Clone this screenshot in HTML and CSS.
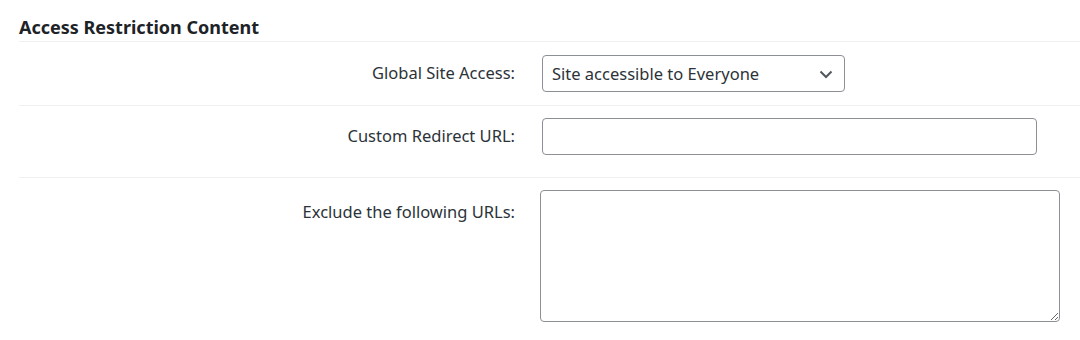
FILE: index.html
```html
<!DOCTYPE html>
<html lang="en">
<head>
    <meta charset="UTF-8">
    <title>Access Restriction Content</title>
    <link rel="stylesheet" href="styles.css">
</head>
<body>

    <h2 class="section-title">Access Restriction Content</h2>

    <div class="form-table">
        <div class="form-row">
            <label class="form-label" for="site-access">Global Site Access:</label>
            <div class="form-field">
                <div class="select-box" id="site-access">
                    <span>Site accessible to Everyone</span>
                    <svg width="16" height="16" viewBox="0 0 16 16">
                        <path d="M2.5 5.5 L8 11 L13.5 5.5" fill="none" stroke="#50575e" stroke-width="2"/>
                    </svg>
                </div>
            </div>
        </div>

        <div class="form-row row-redirect">
            <label class="form-label" for="redirect-url">Custom Redirect URL:</label>
            <div class="form-field">
                <input class="text-input" type="text" id="redirect-url">
            </div>
        </div>

        <div class="form-row row-exclude">
            <label class="form-label" for="exclude-urls">Exclude the following URLs:</label>
            <div class="form-field">
                <textarea class="text-area" id="exclude-urls"></textarea>
            </div>
        </div>
    </div>

</body>
</html>
```

FILE: styles.css
```css
/* General Styling */
body {
    margin: 0;
    padding: 0 0 0 19px;
    background: #ffffff;
    font-family: 'Noto Sans', 'Open Sans', sans-serif;
    font-size: 16.5px;
    color: #2c3338;
}

/* Title */
.section-title {
    margin: 0;
    padding: 15px 0 2px;
    font-size: 18px;
    line-height: 24px;
    font-weight: bold;
    color: #1d2327;
    border-bottom: 1px solid #f0f0f1;
}

/* Rows */
.form-row {
    display: grid;
    grid-template-columns: 496px 1fr;
    column-gap: 27px;
    padding: 13px 0 13px;
    border-bottom: 1px solid #f0f0f1;
}

.row-redirect {
    padding: 12px 0 22px;
}

.row-exclude {
    padding: 12px 0 0;
    border-bottom: none;
}

.form-label {
    text-align: right;
    line-height: 22px;
    padding-top: 7px;
}

.row-exclude .form-label {
    padding-top: 11px;
}

/* Fields */
.select-box {
    box-sizing: border-box;
    width: 303px;
    height: 37px;
    padding: 0 10px 0 9px;
    display: flex;
    align-items: center;
    justify-content: space-between;
    border: 1px solid #8c8f94;
    border-radius: 4px;
    font-size: 16.5px;
    color: #2c3338;
}

.text-input {
    box-sizing: border-box;
    display: block;
    width: 495px;
    height: 37px;
    margin: 0;
    border: 1px solid #8c8f94;
    border-radius: 4px;
}

.text-area {
    box-sizing: border-box;
    display: block;
    width: 520px;
    height: 132px;
    margin: 0 0 0 -2px;
    border: 1px solid #8c8f94;
    border-radius: 4px;
}
```
